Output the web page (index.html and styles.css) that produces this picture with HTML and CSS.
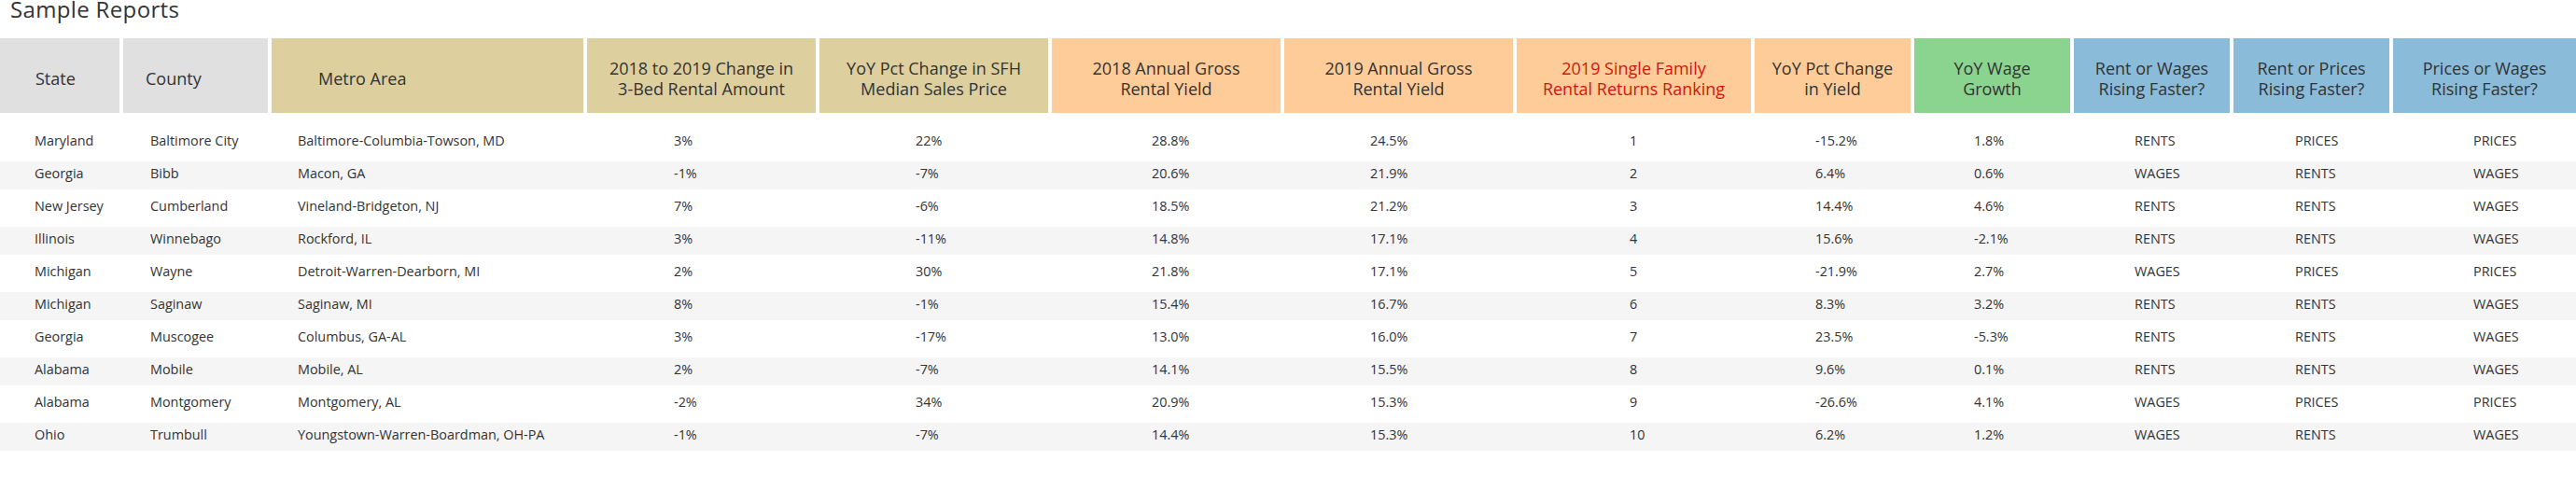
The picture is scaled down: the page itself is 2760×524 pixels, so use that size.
FILE: index.html
```html
<!DOCTYPE html>
<html lang="en">
<head>
<meta charset="utf-8">
<title>Sample Reports</title>
<link rel="stylesheet" href="styles.css">
</head>
<body>
<h1 class="title">Sample Reports</h1>
<div class="report">
  <div class="grid head">
    <div class="hc gray">State</div>
    <div class="hc gray">County</div>
    <div class="hc tan">Metro Area</div>
    <div class="hc tan center">2018 to 2019 Change in<br>3-Bed Rental Amount</div>
    <div class="hc tan center">YoY Pct Change in SFH<br>Median Sales Price</div>
    <div class="hc orange center">2018 Annual Gross<br>Rental Yield</div>
    <div class="hc orange center">2019 Annual Gross<br>Rental Yield</div>
    <div class="hc orange center red">2019 Single Family<br>Rental Returns Ranking</div>
    <div class="hc orange center">YoY Pct Change<br>in Yield</div>
    <div class="hc green center">YoY Wage<br>Growth</div>
    <div class="hc blue center">Rent or Wages<br>Rising Faster?</div>
    <div class="hc blue center">Rent or Prices<br>Rising Faster?</div>
    <div class="hc blue center">Prices or Wages<br>Rising Faster?</div>
  </div>
  <div class="body">
    <div class="grid row"><div>Maryland</div><div>Baltimore City</div><div>Baltimore-Columbia-Towson, MD</div><div>3%</div><div>22%</div><div>28.8%</div><div>24.5%</div><div>1</div><div>-15.2%</div><div>1.8%</div><div>RENTS</div><div>PRICES</div><div>PRICES</div></div>
    <div class="grid row"><div>Georgia</div><div>Bibb</div><div>Macon, GA</div><div>-1%</div><div>-7%</div><div>20.6%</div><div>21.9%</div><div>2</div><div>6.4%</div><div>0.6%</div><div>WAGES</div><div>RENTS</div><div>WAGES</div></div>
    <div class="grid row"><div>New Jersey</div><div>Cumberland</div><div>Vineland-Bridgeton, NJ</div><div>7%</div><div>-6%</div><div>18.5%</div><div>21.2%</div><div>3</div><div>14.4%</div><div>4.6%</div><div>RENTS</div><div>RENTS</div><div>WAGES</div></div>
    <div class="grid row"><div>Illinois</div><div>Winnebago</div><div>Rockford, IL</div><div>3%</div><div>-11%</div><div>14.8%</div><div>17.1%</div><div>4</div><div>15.6%</div><div>-2.1%</div><div>RENTS</div><div>RENTS</div><div>WAGES</div></div>
    <div class="grid row"><div>Michigan</div><div>Wayne</div><div>Detroit-Warren-Dearborn, MI</div><div>2%</div><div>30%</div><div>21.8%</div><div>17.1%</div><div>5</div><div>-21.9%</div><div>2.7%</div><div>WAGES</div><div>PRICES</div><div>PRICES</div></div>
    <div class="grid row"><div>Michigan</div><div>Saginaw</div><div>Saginaw, MI</div><div>8%</div><div>-1%</div><div>15.4%</div><div>16.7%</div><div>6</div><div>8.3%</div><div>3.2%</div><div>RENTS</div><div>RENTS</div><div>WAGES</div></div>
    <div class="grid row"><div>Georgia</div><div>Muscogee</div><div>Columbus, GA-AL</div><div>3%</div><div>-17%</div><div>13.0%</div><div>16.0%</div><div>7</div><div>23.5%</div><div>-5.3%</div><div>RENTS</div><div>RENTS</div><div>WAGES</div></div>
    <div class="grid row"><div>Alabama</div><div>Mobile</div><div>Mobile, AL</div><div>2%</div><div>-7%</div><div>14.1%</div><div>15.5%</div><div>8</div><div>9.6%</div><div>0.1%</div><div>RENTS</div><div>RENTS</div><div>WAGES</div></div>
    <div class="grid row"><div>Alabama</div><div>Montgomery</div><div>Montgomery, AL</div><div>-2%</div><div>34%</div><div>20.9%</div><div>15.3%</div><div>9</div><div>-26.6%</div><div>4.1%</div><div>WAGES</div><div>PRICES</div><div>PRICES</div></div>
    <div class="grid row"><div>Ohio</div><div>Trumbull</div><div>Youngstown-Warren-Boardman, OH-PA</div><div>-1%</div><div>-7%</div><div>14.4%</div><div>15.3%</div><div>10</div><div>6.2%</div><div>1.2%</div><div>WAGES</div><div>RENTS</div><div>WAGES</div></div>
  </div>
</div>
</body>
</html>
```
FILE: styles.css
```css
html, body {
  margin: 0;
  padding: 0;
  background: #ffffff;
}
body {
  font-family: "Open Sans", "Liberation Sans", sans-serif;
  color: #333333;
}
.title {
  margin: 0;
  padding: 0 0 0 11px;
  height: 41px;
  font-size: 24px;
  font-weight: 400;
  letter-spacing: 0.35px;
  line-height: 20px;
  color: #333333;
}
.grid {
  display: grid;
  grid-template-columns: 128px 155px 334px 245px 245px 245px 245px 251px 167px 167px 167px 167px 196px;
  column-gap: 4px;
}
.head {
  height: 80px;
}
.hc {
  display: flex;
  align-items: center;
  padding-top: 5px;
  box-sizing: border-box;
  font-size: 18px;
  line-height: 22px;
  color: #333333;
}
.hc.center {
  justify-content: center;
  text-align: center;
}
.hc:nth-child(1) { padding-left: 38px; }
.hc:nth-child(2) { padding-left: 24px; }
.hc:nth-child(3) { padding-left: 50px; }
.gray { background: #e0e0e0; }
.tan { background: #decf9f; }
.orange { background: #fecc99; }
.green { background: #8bd48f; }
.blue { background: #8abbd9; }
.hc.red { color: #d0150d; }
.body {
  display: flex;
  flex-direction: column;
  row-gap: 5px;
  padding-top: 17px;
}
.row {
  height: 30px;
  font-size: 14.4px;
  line-height: 26px;
  color: #333333;
}
.row:nth-child(even) {
  background: #f5f5f5;
}
.row > div { white-space: nowrap; }
.row > :nth-child(1) { padding-left: 37px; }
.row > :nth-child(2) { padding-left: 29px; }
.row > :nth-child(3) { padding-left: 28px; }
.row > :nth-child(4) { padding-left: 93px; }
.row > :nth-child(5) { padding-left: 103px; }
.row > :nth-child(6) { padding-left: 107px; }
.row > :nth-child(7) { padding-left: 92px; }
.row > :nth-child(8) { padding-left: 121px; }
.row > :nth-child(9) { padding-left: 65px; }
.row > :nth-child(10) { padding-left: 64px; }
.row > :nth-child(11) { padding-left: 65px; }
.row > :nth-child(12) { padding-left: 66px; }
.row > :nth-child(13) { padding-left: 86px; }
```
